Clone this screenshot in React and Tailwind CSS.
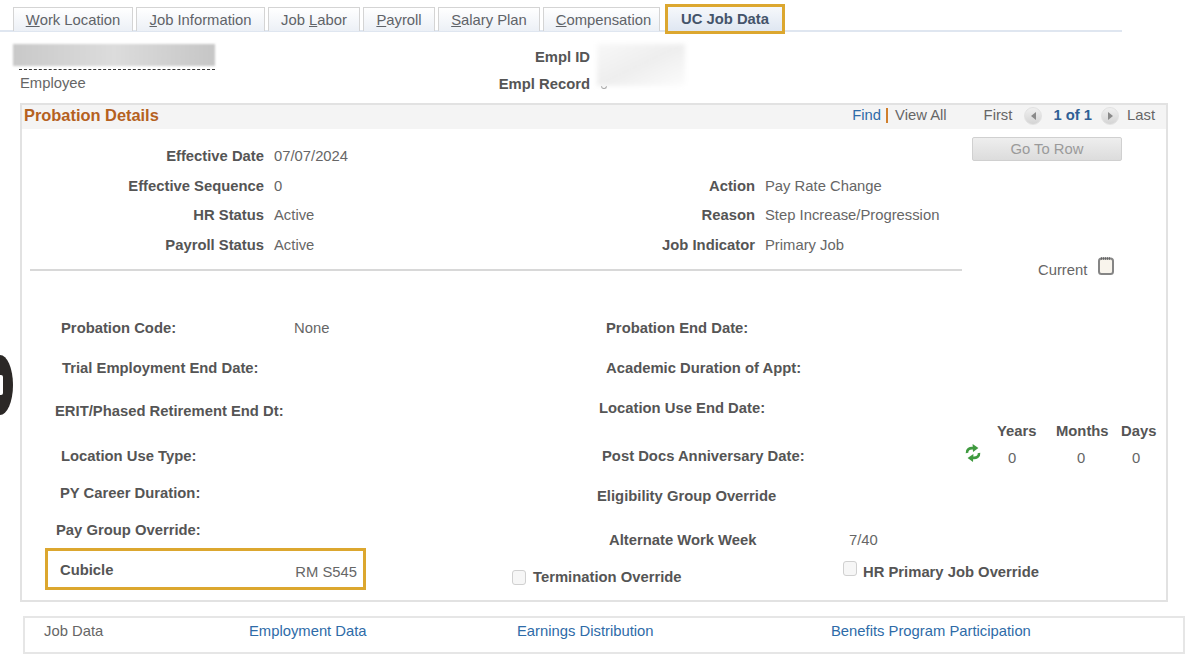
const tabs = [
  { pre: '', key: 'W', post: 'ork Location', w: 'w-[120px]' },
  { pre: '', key: 'J', post: 'ob Information', w: 'w-[129px]' },
  { pre: 'Job\u00a0', key: 'L', post: 'abor', w: 'w-[92px]' },
  { pre: '', key: 'P', post: 'ayroll', w: 'w-[72px]' },
  { pre: '', key: 'S', post: 'alary Plan', w: 'w-[102px]' },
  { pre: '', key: 'C', post: 'ompensation', w: 'w-[117px] pl-[4px]' },
];

const leftFields = [
  { label: 'Probation Code:', value: 'None', cls: 'mt-[47px] pl-[39px]' },
  { label: 'Trial Employment End Date:', cls: 'mt-[20px] pl-[40px]' },
  { label: 'ERIT/Phased Retirement End Dt:', cls: 'mt-[23px] pl-[33px]' },
  { label: 'Location Use Type:', cls: 'mt-[25px] pl-[39px]' },
  { label: 'PY Career Duration:', cls: 'mt-[17px] pl-[38px]' },
  { label: 'Pay Group Override:', cls: 'mt-[17px] pl-[34px]' },
];

const midFields = [
  { label: 'Probation End Date:', cls: 'mt-[47px] pl-[94px]' },
  { label: 'Academic Duration of Appt:', cls: 'mt-[20px] pl-[94px]' },
  { label: 'Location Use End Date:', cls: 'mt-[20px] pl-[87px]' },
  { label: 'Post Docs Anniversary Date:', cls: 'mt-[28px] pl-[90px]' },
  { label: 'Eligibility Group Override', cls: 'mt-[20px] pl-[85px]' },
];

function Label({ children, className = '' }) {
  return <span className={`font-bold text-[#555] whitespace-nowrap ${className}`}>{children}</span>;
}

function NavArrow({ dir }) {
  return (
    <span className="w-[18px] h-[18px] rounded-full bg-gradient-to-b from-[#f0f0f0] to-[#d4d4d4] flex items-center justify-center border border-[#e2e2e2]">
      <span
        className={`w-0 h-0 border-y-[4px] border-y-transparent ${
          dir === 'left' ? 'border-r-[5px] border-r-[#8a8a8a]' : 'border-l-[5px] border-l-[#8a8a8a]'
        }`}
      />
    </span>
  );
}

function TopRow({ label, value, rightLabel, rightValue }) {
  return (
    <div className="flex h-[29.6px] items-center">
      <div className="w-[242px] text-right"><Label>{label}</Label></div>
      <div className="w-[491px] pl-[10px]">{value}</div>
      {rightLabel && (
        <>
          <div className="w-0 flex justify-end"><Label>{rightLabel}</Label></div>
          <div className="pl-[10px]">{rightValue}</div>
        </>
      )}
    </div>
  );
}

function Checkbox() {
  return <span className="block w-[14px] h-[15px] rounded-[3px] border border-[#d0d0d0] bg-[#f6f6f6] shrink-0" />;
}

function NotebookIcon() {
  return (
    <svg width="16" height="18" viewBox="0 0 16 18" className="shrink-0">
      <rect x="1" y="1.5" width="14" height="15.5" rx="2.5" fill="#f8f4ec" stroke="#858585" strokeWidth="2" />
      <path d="M3 1.5 H13" stroke="#666" strokeWidth="2.4" strokeDasharray="1 1" />
    </svg>
  );
}

function RefreshIcon() {
  return (
    <svg width="16" height="18" viewBox="0 0 16 18" fill="none" stroke="#3f9a3f" strokeWidth="2.6" className="block">
      <path d="M2 9 C1.6 5.6 4.4 3.6 8.5 4.2" />
      <path d="M7.6 0 L13.4 4 L8 8 Z" fill="#3f9a3f" stroke="none" />
      <path d="M14 9 C14.4 12.4 11.6 14.4 7.5 13.8" />
      <path d="M8.4 10 L2.6 14 L8 18 Z" fill="#3f9a3f" stroke="none" />
    </svg>
  );
}

export default function App() {
  return (
    <div className="relative w-[1200px] h-[666px] overflow-hidden bg-white text-[#666] text-[14.8px] font-['Liberation_Sans',Arial,sans-serif]">
      {/* clipped glyph from the page behind */}
      <div className="absolute left-0 top-[355px] w-[13px] h-[60px] rounded-r-[13px_30px] bg-[#2b2826] flex items-center">
        <div className="w-[3px] h-[20px] rounded-r-[2px] bg-white" />
      </div>

      {/* tabs */}
      <div className="flex items-end w-[1122px] h-[32px] pl-[13px] border-b-2 border-[#dfe6f0]">
        <div className="flex items-end gap-[3px] h-[30px] -mb-[1px]">
          {tabs.map((t) => (
            <div
              key={t.post}
              className={`${t.w} h-[24px] pt-[1px] flex items-center justify-center border border-b-0 border-[#d4d4d4] bg-gradient-to-b from-white to-[#ecf0f6] text-[#5f6368]`}
            >
              {t.pre}
              <span className="underline">{t.key}</span>
              {t.post}
            </div>
          ))}
          <div className="ml-[2px] -mb-[3px] w-[120px] h-[30px] flex items-center justify-center border-[3px] border-[#dca72f] bg-gradient-to-b from-[#f6f8fb] to-[#dfe7f2] font-bold text-[#44546a]">
            UC Job Data
          </div>
        </div>
      </div>

      {/* employee header */}
      <div className="flex h-[71px]">
        <div className="w-[597px] flex pt-[12px]">
          <div className="ml-[13px] w-[202px]">
            <div className="h-[22px] bg-gradient-to-r from-[#c9c9c9] via-[#dcdcdc] to-[#c6c6c6] blur-[1px]" />
            <div className="ml-[6px] mt-[3px] border-t border-dashed border-[#333]" />
            <div className="ml-[7px] mt-[2px]">Employee</div>
          </div>
          <div className="flex-1 flex flex-col items-end pr-[7px] pt-[2px] gap-[5px]">
            <Label>Empl ID</Label>
            <Label>Empl Record</Label>
          </div>
        </div>
        <div className="mt-[12px]">
          <div className="w-[88px] h-[42px] bg-gradient-to-br from-[#f8f8f8] via-[#eeeeee] to-[#fcfcfc] blur-[2px]" />
          <div className="ml-[4px] w-[6px] h-[3px] border-x border-b border-[#999] rounded-b-[3px]" />
        </div>
      </div>

      {/* probation panel */}
      <div className="ml-[20px] w-[1148px] h-[499px] border-2 border-[#e2e2e2]">
        <div className="h-[24px] bg-[#f4f4f4] flex items-center pb-[3px] pl-[2px] pr-[11px]">
          <span className="font-bold text-[#b5611f] text-[16.4px]">Probation Details</span>
          <span className="ml-auto text-[#2e6ba8]">Find</span>
          <span className="ml-[5px] mr-[7px] w-[2px] h-[15px] bg-[#d07f2c]" />
          <span>View All</span>
          <span className="ml-[37px]">First</span>
          <span className="ml-[12px]"><NavArrow dir="left" /></span>
          <span className="ml-[11px] font-bold text-[#2f5f94]">1 of 1</span>
          <span className="ml-[9px]"><NavArrow dir="right" /></span>
          <span className="ml-[8px]">Last</span>
        </div>

        {/* effective-dated summary */}
        <div className="flex h-[142px]">
          <div className="w-[950px]">
            <div className="pt-[12.5px]">
              <TopRow label="Effective Date" value="07/07/2024" />
              <TopRow label="Effective Sequence" value="0" rightLabel="Action" rightValue="Pay Rate Change" />
              <TopRow label="HR Status" value="Active" rightLabel="Reason" rightValue="Step Increase/Progression" />
              <TopRow label="Payroll Status" value="Active" rightLabel="Job Indicator" rightValue="Primary Job" />
            </div>
            <div className="ml-[8px] mt-[9px] border-t-2 border-[#d8d8d8] w-[932px]" />
          </div>
          <div className="flex-1">
            <div className="mt-[8px] w-[150px] h-[24px] rounded-[2px] border border-[#d0d0d0] bg-gradient-to-b from-[#eee] to-[#dcdcdc] flex items-center justify-center text-[#9a9a9a]">
              Go To Row
            </div>
            <div className="mt-[96px] ml-[66px] flex items-start gap-[11px]">
              <span className="mt-[5px] leading-[16px]">Current</span>
              <NotebookIcon />
            </div>
          </div>
        </div>

        {/* probation fields */}
        <div className="flex">
          <div className="w-[490px] shrink-0">
            {leftFields.map((f) => (
              <div key={f.label} className={`h-[20px] flex items-center ${f.cls}`}>
                <Label className={f.value ? 'w-[233px]' : ''}>{f.label}</Label>
                {f.value && <span>{f.value}</span>}
              </div>
            ))}
            <div className="mt-[8px] ml-[23px] w-[321px] h-[42px] box-border border-[3px] border-[#dca72f] flex items-center pt-[2px] pl-[12px] pr-[6px]">
              <Label>Cubicle</Label>
              <span className="ml-auto mt-[4px]">RM S545</span>
            </div>
          </div>

          <div className="w-[448px] shrink-0">
            {midFields.map((f) => (
              <div key={f.label} className={`h-[20px] flex items-center ${f.cls}`}>
                <Label>{f.label}</Label>
              </div>
            ))}
            <div className="mt-[24px] h-[20px] pl-[97px] flex items-center">
              <Label className="w-[240px]">Alternate Work Week</Label>
              <span>7/40</span>
            </div>
            <div className="mt-[11px] flex items-start">
              <div className="w-[331px] shrink-0 mt-[5px] flex items-center gap-[7px]">
                <Checkbox />
                <Label>Termination Override</Label>
              </div>
              <div className="flex items-start gap-[6px]">
                <Checkbox />
                <Label>HR Primary Job Override</Label>
              </div>
            </div>
          </div>

          {/* tenure */}
          <div className="mt-[149px] h-fit grid grid-cols-[37px_59px_65px_34px] gap-y-[5px] items-center">
            <span />
            <Label>Years</Label>
            <Label>Months</Label>
            <Label>Days</Label>
            <span className="pl-[5px] -mt-[11px]"><RefreshIcon /></span>
            <span className="pl-[11px]">0</span>
            <span className="pl-[21px]">0</span>
            <span className="pl-[11px]">0</span>
          </div>
        </div>
      </div>

      {/* related links */}
      <div className="ml-[23px] mt-[14px] w-[1162px] h-[38px] border-2 border-[#e6e6e6] flex pl-[19px] pt-[2px] text-[#2e6ba8]">
        <span className="w-[205px] text-[#666]">Job Data</span>
        <span className="w-[268px]">Employment Data</span>
        <span className="w-[314px]">Earnings Distribution</span>
        <span>Benefits Program Participation</span>
      </div>
    </div>
  );
}
